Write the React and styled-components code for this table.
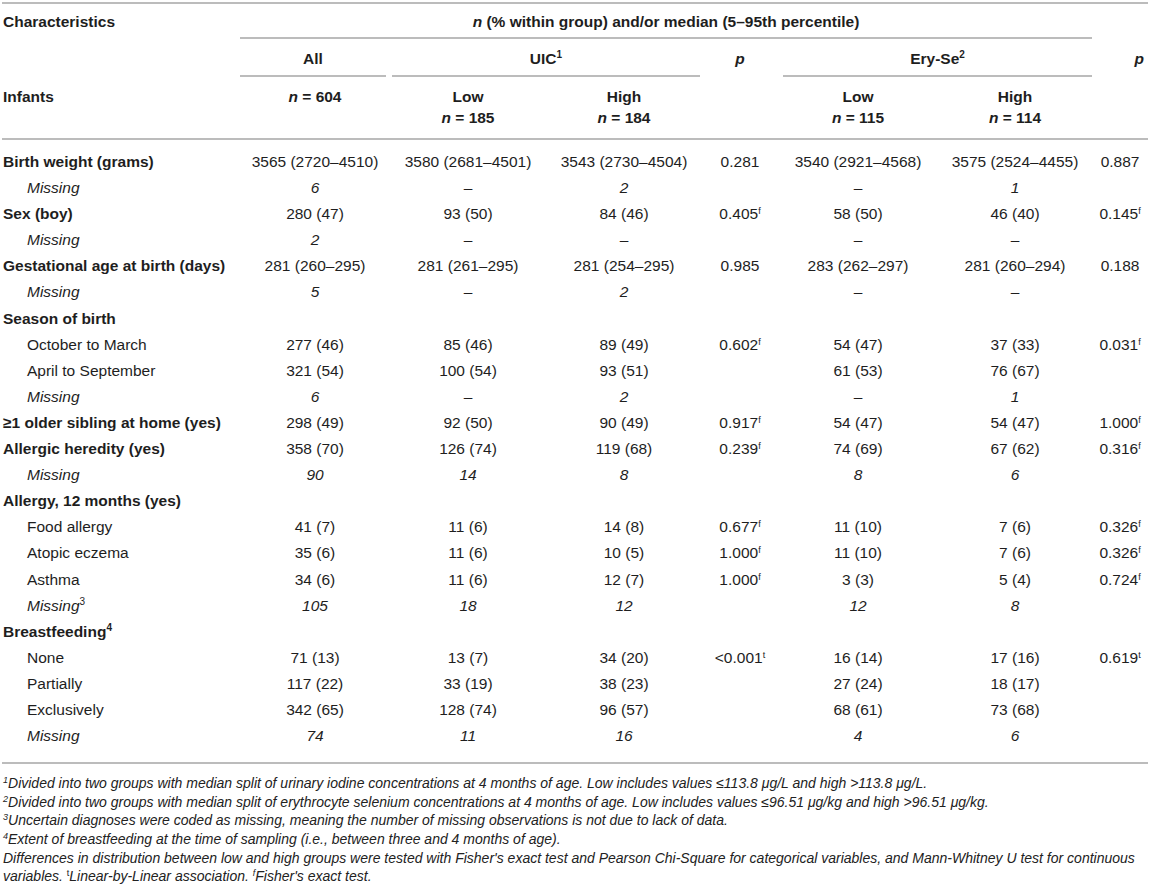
import React from 'react';
import styled, { createGlobalStyle } from 'styled-components';

const GlobalStyle = createGlobalStyle`
	html, body {
		margin: 0;
		padding: 0;
		background: #fff;
	}
	body {
		font-family: "Liberation Sans", Arial, sans-serif;
		color: #1e1e1e;
	}
`;

const RULE = '#bcbcbc';

const Page = styled.div`
	width: 1146px;
	padding: 0 2px;
`;

const Table = styled.table`
	width: 1146px;
	table-layout: fixed;
	border-collapse: separate;
	border-spacing: 0;
	border-top: 2px solid ${RULE};
	border-bottom: 2px solid ${RULE};
	margin-top: 2px;
	font-size: 15.5px;
`;

const HeadCell = styled.th`
	padding: 0;
	font-weight: 700;
	vertical-align: top;
	text-align: ${props => props.$align || 'center'};
`;

const HeadText = styled.div`
	padding: ${props => props.$pad || '9px 0 6px'};
	margin: ${props => props.$inset || '0'};
	line-height: 18px;
	border-bottom: 2px solid ${props => (props.$rule ? RULE : 'transparent')};
`;

const SubHead = styled.th`
	padding: 9px 0 10px;
	padding-left: ${props => (props.$left ? '1px' : '0')};
	font-weight: 700;
	line-height: 21px;
	vertical-align: top;
	text-align: ${props => (props.$left ? 'left' : 'center')};
	border-bottom: 2px solid ${RULE};
`;

const Body = styled.tbody`
	tr:first-child td {
		padding-top: 9px;
	}
	tr:last-child td {
		padding-bottom: 13px;
	}
`;

const Label = styled.td`
	height: 26.1px;
	padding: 0 0 0 ${props => (props.$kind === 'head' ? '1px' : '25px')};
	line-height: 26.1px;
	white-space: nowrap;
	font-weight: ${props => (props.$kind === 'head' ? 700 : 400)};
	font-style: ${props => (props.$kind === 'missing' ? 'italic' : 'normal')};
`;

const Cell = styled.td`
	height: 26.1px;
	padding: 0;
	line-height: 26.1px;
	text-align: center;
	white-space: nowrap;
	font-style: ${props => (props.$italic ? 'italic' : 'normal')};
`;

const Sup = styled.sup`
	font-size: ${props => props.$size || '10px'};
	line-height: 0;
	vertical-align: ${props => props.$raise || '6px'};
	font-style: ${props => (props.$upright ? 'normal' : 'inherit')};
`;

const N = styled.i`
	font-weight: 700;
`;

const Notes = styled.div`
	padding: 10px 0 0 1px;
	font-size: 14px;
	line-height: 18.6px;
	font-style: italic;
	color: #222;
`;

const Note = styled.div``;

const P = ({ v, s }) => (
	<>
		{v}
		{s && <Sup $size="9px" $raise="5px">{s}</Sup>}
	</>
);

const rows = [
	{ label: 'Birth weight (grams)', kind: 'head', cells: ['3565 (2720–4510)', '3580 (2681–4501)', '3543 (2730–4504)', ['0.281'], '3540 (2921–4568)', '3575 (2524–4455)', ['0.887']] },
	{ label: 'Missing', kind: 'missing', cells: ['6', '–', '2', '', '–', '1', ''] },
	{ label: 'Sex (boy)', kind: 'head', cells: ['280 (47)', '93 (50)', '84 (46)', ['0.405', 'f'], '58 (50)', '46 (40)', ['0.145', 'f']] },
	{ label: 'Missing', kind: 'missing', cells: ['2', '–', '–', '', '–', '–', ''] },
	{ label: 'Gestational age at birth (days)', kind: 'head', cells: ['281 (260–295)', '281 (261–295)', '281 (254–295)', ['0.985'], '283 (262–297)', '281 (260–294)', ['0.188']] },
	{ label: 'Missing', kind: 'missing', cells: ['5', '–', '2', '', '–', '–', ''] },
	{ label: 'Season of birth', kind: 'head', cells: [] },
	{ label: 'October to March', kind: 'sub', cells: ['277 (46)', '85 (46)', '89 (49)', ['0.602', 'f'], '54 (47)', '37 (33)', ['0.031', 'f']] },
	{ label: 'April to September', kind: 'sub', cells: ['321 (54)', '100 (54)', '93 (51)', '', '61 (53)', '76 (67)', ''] },
	{ label: 'Missing', kind: 'missing', cells: ['6', '–', '2', '', '–', '1', ''] },
	{ label: '≥1 older sibling at home (yes)', kind: 'head', cells: ['298 (49)', '92 (50)', '90 (49)', ['0.917', 'f'], '54 (47)', '54 (47)', ['1.000', 'f']] },
	{ label: 'Allergic heredity (yes)', kind: 'head', cells: ['358 (70)', '126 (74)', '119 (68)', ['0.239', 'f'], '74 (69)', '67 (62)', ['0.316', 'f']] },
	{ label: 'Missing', kind: 'missing', cells: ['90', '14', '8', '', '8', '6', ''] },
	{ label: 'Allergy, 12 months (yes)', kind: 'head', cells: [] },
	{ label: 'Food allergy', kind: 'sub', cells: ['41 (7)', '11 (6)', '14 (8)', ['0.677', 'f'], '11 (10)', '7 (6)', ['0.326', 'f']] },
	{ label: 'Atopic eczema', kind: 'sub', cells: ['35 (6)', '11 (6)', '10 (5)', ['1.000', 'f'], '11 (10)', '7 (6)', ['0.326', 'f']] },
	{ label: 'Asthma', kind: 'sub', cells: ['34 (6)', '11 (6)', '12 (7)', ['1.000', 'f'], '3 (3)', '5 (4)', ['0.724', 'f']] },
	{ label: 'Missing', sup: '3', kind: 'missing', cells: ['105', '18', '12', '', '12', '8', ''] },
	{ label: 'Breastfeeding', sup: '4', kind: 'head', cells: [] },
	{ label: 'None', kind: 'sub', cells: ['71 (13)', '13 (7)', '34 (20)', ['<0.001', 't'], '16 (14)', '17 (16)', ['0.619', 't']] },
	{ label: 'Partially', kind: 'sub', cells: ['117 (22)', '33 (19)', '38 (23)', '', '27 (24)', '18 (17)', ''] },
	{ label: 'Exclusively', kind: 'sub', cells: ['342 (65)', '128 (74)', '96 (57)', '', '68 (61)', '73 (68)', ''] },
	{ label: 'Missing', kind: 'missing', cells: ['74', '11', '16', '', '4', '6', ''] },
];

const widths = [238, 150, 156, 156, 76, 160, 154, 56];

const Row = ({ row }) => {
	const cells = row.cells.length ? row.cells : Array(7).fill('');
	return (
		<tr>
			<Label $kind={row.kind}>
				{row.label}
				{row.sup && <Sup $upright>{row.sup}</Sup>}
			</Label>
			{cells.map((c, i) => (
				<Cell key={i} $italic={row.kind === 'missing'}>
					{Array.isArray(c) ? <P v={c[0]} s={c[1]} /> : c}
				</Cell>
			))}
		</tr>
	);
};

export default function App() {
	return (
		<Page>
			<GlobalStyle />
			<Table>
				<colgroup>
					{widths.map((w, i) => <col key={i} style={{ width: w }} />)}
				</colgroup>
				<thead>
					<tr>
						<HeadCell $align="left">
							<HeadText $inset="0 0 0 1px">Characteristics</HeadText>
						</HeadCell>
						<HeadCell colSpan={6}>
							<HeadText $rule>
								<N>n</N> (% within group) and/or median (5–95th percentile)
							</HeadText>
						</HeadCell>
						<HeadCell />
					</tr>
					<tr>
						<HeadCell />
						<HeadCell>
							<HeadText $rule $pad="11px 0 7px" $inset="0 4px 0 0">All</HeadText>
						</HeadCell>
						<HeadCell colSpan={2}>
							<HeadText $rule $pad="11px 0 7px" $inset="0 2px">
								UIC<Sup>1</Sup>
							</HeadText>
						</HeadCell>
						<HeadCell>
							<HeadText $pad="11px 0 7px"><N>p</N></HeadText>
						</HeadCell>
						<HeadCell colSpan={2}>
							<HeadText $rule $pad="11px 0 7px" $inset="0 0 0 5px">
								Ery-Se<Sup>2</Sup>
							</HeadText>
						</HeadCell>
						<HeadCell $align="right">
							<HeadText $pad="11px 0 7px" $inset="0 4px 0 0"><N>p</N></HeadText>
						</HeadCell>
					</tr>
					<tr>
						<SubHead $left>Infants</SubHead>
						<SubHead><N>n</N> = 604</SubHead>
						<SubHead>Low<br /><N>n</N> = 185</SubHead>
						<SubHead>High<br /><N>n</N> = 184</SubHead>
						<SubHead />
						<SubHead>Low<br /><N>n</N> = 115</SubHead>
						<SubHead>High<br /><N>n</N> = 114</SubHead>
						<SubHead />
					</tr>
				</thead>
				<Body>
					{rows.map((r, i) => <Row key={i} row={r} />)}
				</Body>
			</Table>
			<Notes>
				<Note><Sup $size="9px" $raise="5px">1</Sup>Divided into two groups with median split of urinary iodine concentrations at 4 months of age. Low includes values ≤113.8 μg/L and high &gt;113.8 μg/L.</Note>
				<Note><Sup $size="9px" $raise="5px">2</Sup>Divided into two groups with median split of erythrocyte selenium concentrations at 4 months of age. Low includes values ≤96.51 μg/kg and high &gt;96.51 μg/kg.</Note>
				<Note><Sup $size="9px" $raise="5px">3</Sup>Uncertain diagnoses were coded as missing, meaning the number of missing observations is not due to lack of data.</Note>
				<Note><Sup $size="9px" $raise="5px">4</Sup>Extent of breastfeeding at the time of sampling (i.e., between three and 4 months of age).</Note>
				<Note>
					Differences in distribution between low and high groups were tested with Fisher's exact test and Pearson Chi-Square for categorical variables, and Mann-Whitney U test for continuous variables. <Sup $size="9px" $raise="5px" $upright>t</Sup>Linear-by-Linear association. <Sup $size="9px" $raise="5px">f</Sup>Fisher's exact test.
				</Note>
			</Notes>
		</Page>
	);
}
